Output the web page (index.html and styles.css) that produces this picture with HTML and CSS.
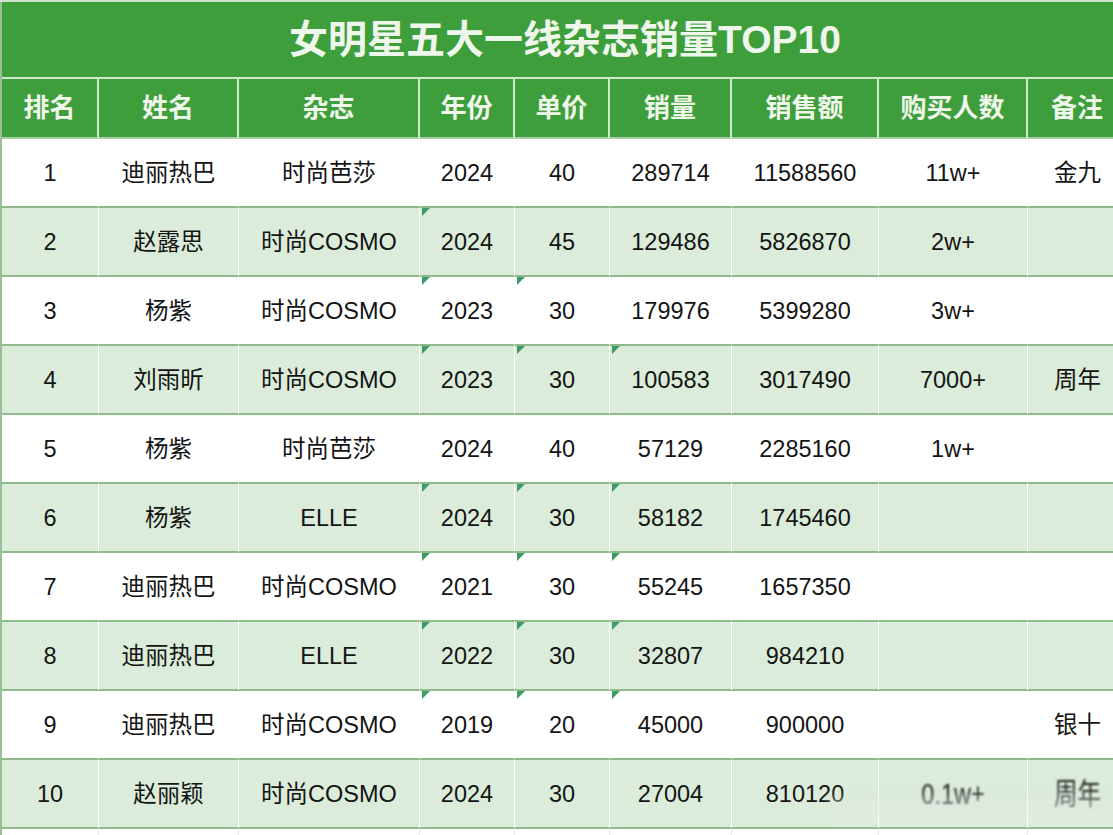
FILE: index.html
```html
<!DOCTYPE html>
<html lang="zh">
<head>
<meta charset="utf-8">
<title>女明星五大一线杂志销量TOP10</title>
<link rel="stylesheet" href="styles.css">
</head>
<body>
<div class="sheet">
  <table class="grid">
    <colgroup>
      <col class="c1"><col class="c2"><col class="c3"><col class="c4"><col class="c5">
      <col class="c6"><col class="c7"><col class="c8"><col class="c9">
    </colgroup>
    <thead>
      <tr class="title-row"><th colspan="9" class="title">女明星五大一线杂志销量TOP10</th></tr>
      <tr class="head-row">
        <th>排名</th><th>姓名</th><th>杂志</th><th>年份</th><th>单价</th><th>销量</th><th>销售额</th><th>购买人数</th><th>备注</th>
      </tr>
    </thead>
    <tbody>
      <tr class="odd"><td>1</td><td>迪丽热巴</td><td>时尚芭莎</td><td>2024</td><td>40</td><td>289714</td><td>11588560</td><td>11w+</td><td>金九</td></tr>
      <tr class="even"><td>2</td><td>赵露思</td><td>时尚COSMO</td><td class="t">2024</td><td>45</td><td>129486</td><td>5826870</td><td>2w+</td><td></td></tr>
      <tr class="odd"><td>3</td><td>杨紫</td><td>时尚COSMO</td><td class="t">2023</td><td class="t">30</td><td>179976</td><td>5399280</td><td>3w+</td><td></td></tr>
      <tr class="even"><td>4</td><td>刘雨昕</td><td>时尚COSMO</td><td class="t">2023</td><td class="t">30</td><td class="t">100583</td><td>3017490</td><td>7000+</td><td>周年</td></tr>
      <tr class="odd"><td>5</td><td>杨紫</td><td>时尚芭莎</td><td>2024</td><td>40</td><td>57129</td><td>2285160</td><td>1w+</td><td></td></tr>
      <tr class="even"><td>6</td><td>杨紫</td><td>ELLE</td><td class="t">2024</td><td class="t">30</td><td class="t">58182</td><td>1745460</td><td></td><td></td></tr>
      <tr class="odd"><td>7</td><td>迪丽热巴</td><td>时尚COSMO</td><td class="t">2021</td><td class="t">30</td><td class="t">55245</td><td>1657350</td><td></td><td></td></tr>
      <tr class="even"><td>8</td><td>迪丽热巴</td><td>ELLE</td><td class="t">2022</td><td class="t">30</td><td class="t">32807</td><td>984210</td><td></td><td></td></tr>
      <tr class="odd"><td>9</td><td>迪丽热巴</td><td>时尚COSMO</td><td class="t">2019</td><td class="t">20</td><td class="t">45000</td><td>900000</td><td></td><td>银十</td></tr>
      <tr class="even last"><td>10</td><td>赵丽颖</td><td>时尚COSMO</td><td>2024</td><td>30</td><td>27004</td><td>810120</td><td><span class="smudge">0.1w+</span></td><td><span class="smudge">周年</span></td></tr>
      <tr class="tail"><td></td><td></td><td></td><td></td><td></td><td></td><td></td><td></td><td></td></tr>
    </tbody>
  </table>
  <div class="watermark"></div>
</div>
</body>
</html>
```

FILE: styles.css
```css
html, body {
  margin: 0;
  padding: 0;
  background: #ffffff;
}

body {
  width: 1113px;
  height: 835px;
  overflow: hidden;
  font-family: "Liberation Sans", "Noto Sans CJK SC", sans-serif;
}

.sheet {
  position: relative;
  width: 1113px;
  height: 835px;
  overflow: hidden;
  border-top: 2px solid #cfe2cd;
  box-sizing: border-box;
}

.grid {
  table-layout: fixed;
  border-collapse: separate;
  border-spacing: 0;
  width: 1126px;
  border-left: 2px solid #98bf95;
}

.c1 { width: 97px; }
.c2 { width: 140px; }
.c3 { width: 181px; }
.c4 { width: 95px; }
.c5 { width: 95px; }
.c6 { width: 122px; }
.c7 { width: 147px; }
.c8 { width: 149px; }
.c9 { width: 100px; }

.title {
  height: 75px;
  padding: 0;
  background: #3e9e3b;
  color: #eff7ec;
  font-size: 39px;
  line-height: 40px;
  font-weight: bold;
  text-align: center;
  vertical-align: middle;
  border-bottom: 2px solid #cfe8ca;
}

.head-row th {
  height: 58px;
  padding: 0;
  background: #3e9e3b;
  color: #eef7ea;
  font-size: 26px;
  line-height: 30px;
  font-weight: bold;
  text-align: center;
  vertical-align: middle;
  border-right: 2px solid #cfe8ca;
  border-bottom: 2px solid #a9cfa3;
}

tbody td {
  height: 67px;
  padding: 0;
  font-size: 23.5px;
  line-height: 30px;
  color: #141414;
  text-align: center;
  vertical-align: middle;
  white-space: nowrap;
  border-right: 1px solid #ffffff;
  border-bottom: 2px solid #8fba8b;
  position: relative;
}

.odd td { background: #ffffff; }
.even td { background: #dbecda; }

.tail td {
  height: 6px;
  line-height: 6px;
  background: #ffffff;
  border-bottom: none;
  border-right: 1px solid #e4eee3;
}

.t::before {
  content: "";
  position: absolute;
  top: 0;
  left: 2px;
  width: 0;
  height: 0;
  border-top: 8px solid #3f9968;
  border-right: 8px solid transparent;
}

.smudge {
  display: inline-block;
  filter: blur(0.9px);
  transform: scaleY(1.25);
  color: #1e1e1e;
}

.watermark {
  position: absolute;
  left: 830px;
  top: 788px;
  width: 283px;
  height: 36px;
  background: linear-gradient(180deg, rgba(255,255,255,0) 0%, rgba(225,232,225,0.5) 40%, rgba(255,255,255,0.15) 100%);
  filter: blur(3px);
}
```
